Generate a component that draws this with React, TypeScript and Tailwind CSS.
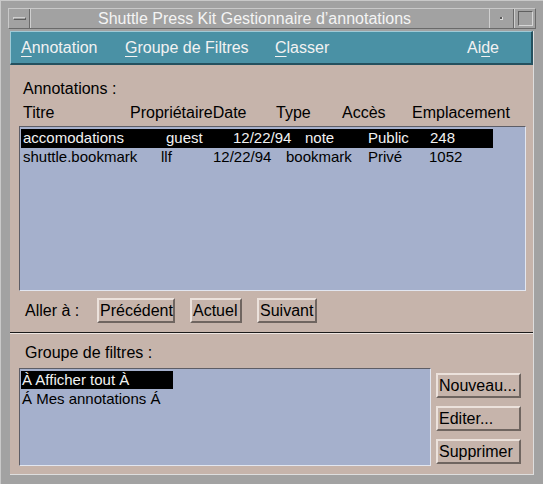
import React from "react";

const rows = [
  { cells: ["accomodations", "guest", "12/22/94", "note", "Public", "248"], widths: [143, 67, 72, 63, 62], selected: true },
  { cells: ["shuttle.bookmark", "llf", "12/22/94", "bookmark", "Privé", "1052"], widths: [138, 52, 73, 82, 61], selected: false },
];

const headers = [
  { label: "Titre", w: "w-[107px]" },
  { label: "PropriétaireDate", w: "w-[146px]" },
  { label: "Type", w: "w-[66px]" },
  { label: "Accès", w: "w-[70px]" },
  { label: "Emplacement", w: "" },
];

function Motif({ label, className = "" }: { label: string; className?: string }) {
  // bouton Motif : bord clair en haut/gauche, sombre en bas/droite
  return (
    <button
      className={`h-[25px] bg-[#c6b4ab] border-2 border-t-[#ece2dc] border-l-[#ece2dc] border-b-[#6f6560] border-r-[#6f6560] text-[16px] leading-[19px] text-black text-left px-[1px] ${className}`}
    >
      {label}
    </button>
  );
}

export default function App() {
  return (
    <div className="w-[543px] h-[484px] bg-[#a2a2a2] flex flex-col pt-[7px] px-[7px] pb-[9px] font-['Liberation_Sans',Arial,sans-serif] border-l border-t border-[#c9c9c9]">
      {/* barre de titre */}
      <div className="h-[21px] flex border-t border-l border-[#c9c9c9] border-b border-r border-b-[#6a6a6a] border-r-[#6a6a6a]">
        <div className="w-[21px] flex items-center justify-center border-r border-[#6a6a6a]">
          <div className="w-[13px] h-[3px] border-t border-l border-[#d0d0d0] border-b border-r border-b-[#5f5f5f] border-r-[#5f5f5f]" />
        </div>
        <div className="flex-1 pl-[67px] text-[16px] leading-[20px] text-[#f4f4f4] whitespace-nowrap border-l border-[#cfcfcf]">
          Shuttle Press Kit Gestionnaire d’annotations
        </div>
        <div className="w-[25px] flex items-center justify-center border-l border-[#cfcfcf] border-r border-r-[#6a6a6a]">
          <div className="w-[3px] h-[3px] bg-[#5a5a5a] border-b border-r border-[#dcdcdc]" />
        </div>
        <div className="w-[21px] flex items-center justify-center border-l border-[#cfcfcf]">
          <div className="w-[15px] h-[15px] border border-t-[#5f5f5f] border-l-[#5f5f5f] border-b-[#d6d6d6] border-r-[#d6d6d6]" />
        </div>
      </div>

      {/* zone cliente */}
      <div className="flex-1 mt-[2px] mx-[2px] bg-[#c6b4ab] flex flex-col border-r border-b border-[#dedede]">
        {/* barre de menus */}
        <div className="h-[34px] bg-[#4a91a5] border-t border-l border-[#9fcad6] border-b-2 border-b-[#24515f] border-r-2 border-r-[#24515f] flex items-center text-[16px] text-[#f2f2f2] whitespace-nowrap">
          <span className="ml-[10px] w-[104px] shrink-0">
            <u className="underline decoration-1 underline-offset-[3px]">A</u>nnotation
          </span>
          <span className="w-[150px] shrink-0">
            <u className="underline decoration-1 underline-offset-[3px]">G</u>roupe de Filtres
          </span>
          <span>
            <u className="underline decoration-1 underline-offset-[3px]">C</u>lasser
          </span>
          <span className="ml-auto mr-[32px]">
            Ai<u className="underline decoration-1 underline-offset-[3px]">d</u>e
          </span>
        </div>

        {/* section annotations */}
        <div className="px-[9px] text-black">
          <div className="mt-[15px] h-[18px] leading-[18px] text-[16px] pl-[4px]">Annotations :</div>
          <div className="mt-[6px] h-[18px] leading-[18px] text-[16px] pl-[4px] flex whitespace-nowrap">
            {headers.map((h) => (
              <span key={h.label} className={h.w}>
                {h.label}
              </span>
            ))}
          </div>
          <div className="mt-[4px] h-[165px] w-[507px] bg-[#a5b0cc] border-t border-l border-[#5d5d66] border-b border-r border-b-[#e2e6f0] border-r-[#e2e6f0] pt-[2px] pl-[1px]">
            {rows.map((r, i) => (
              <div
                key={i}
                className={`h-[19px] leading-[18px] w-[472px] pl-[2px] flex whitespace-nowrap text-[15px] ${r.selected ? "bg-black text-[#f2f2f2]" : "text-black"}`}
              >
                {r.cells.map((c, j) => (
                  <span key={j} className="shrink-0" style={j < r.widths.length ? { width: r.widths[j] } : undefined}>
                    {c}
                  </span>
                ))}
              </div>
            ))}
          </div>

          {/* aller à */}
          <div className="mt-[7px] h-[25px] flex items-center text-[16px]">
            <span className="ml-[6px] w-[72px]">Aller à :</span>
            <Motif label="Précédent" className="w-[78px]" />
            <Motif label="Actuel" className="w-[52px] ml-[15px]" />
            <Motif label="Suivant" className="w-[60px] ml-[15px]" />
          </div>
        </div>

        {/* séparateur */}
        <div className="mt-[9px] h-[2px] border-t border-[#1a1a1a] border-b border-b-[#eee6e2]" />

        {/* groupe de filtres */}
        <div className="px-[9px] text-black">
          <div className="mt-[10px] h-[18px] leading-[18px] text-[16px] pl-[6px]">Groupe de filtres :</div>
          <div className="mt-[6px] flex">
            <div className="w-[412px] h-[98px] bg-[#a5b0cc] border-t border-l border-[#5d5d66] border-b border-r border-b-[#e2e6f0] border-r-[#e2e6f0] pt-[2px] pl-[1px] text-[15px]">
              <div className="h-[18px] leading-[18px] w-[152px] bg-black text-[#f2f2f2] pl-[1px] whitespace-nowrap">
                À Afficher tout À
              </div>
              <div className="h-[19px] leading-[20px] pl-[1px] whitespace-nowrap">Á Mes annotations Á</div>
            </div>
            <div className="ml-[5px] mt-[5px] flex flex-col gap-[8px]">
              <Motif label="Nouveau..." className="w-[85px]" />
              <Motif label="Editer..." className="w-[85px]" />
              <Motif label="Supprimer" className="w-[85px]" />
            </div>
          </div>
        </div>
      </div>
    </div>
  );
}
